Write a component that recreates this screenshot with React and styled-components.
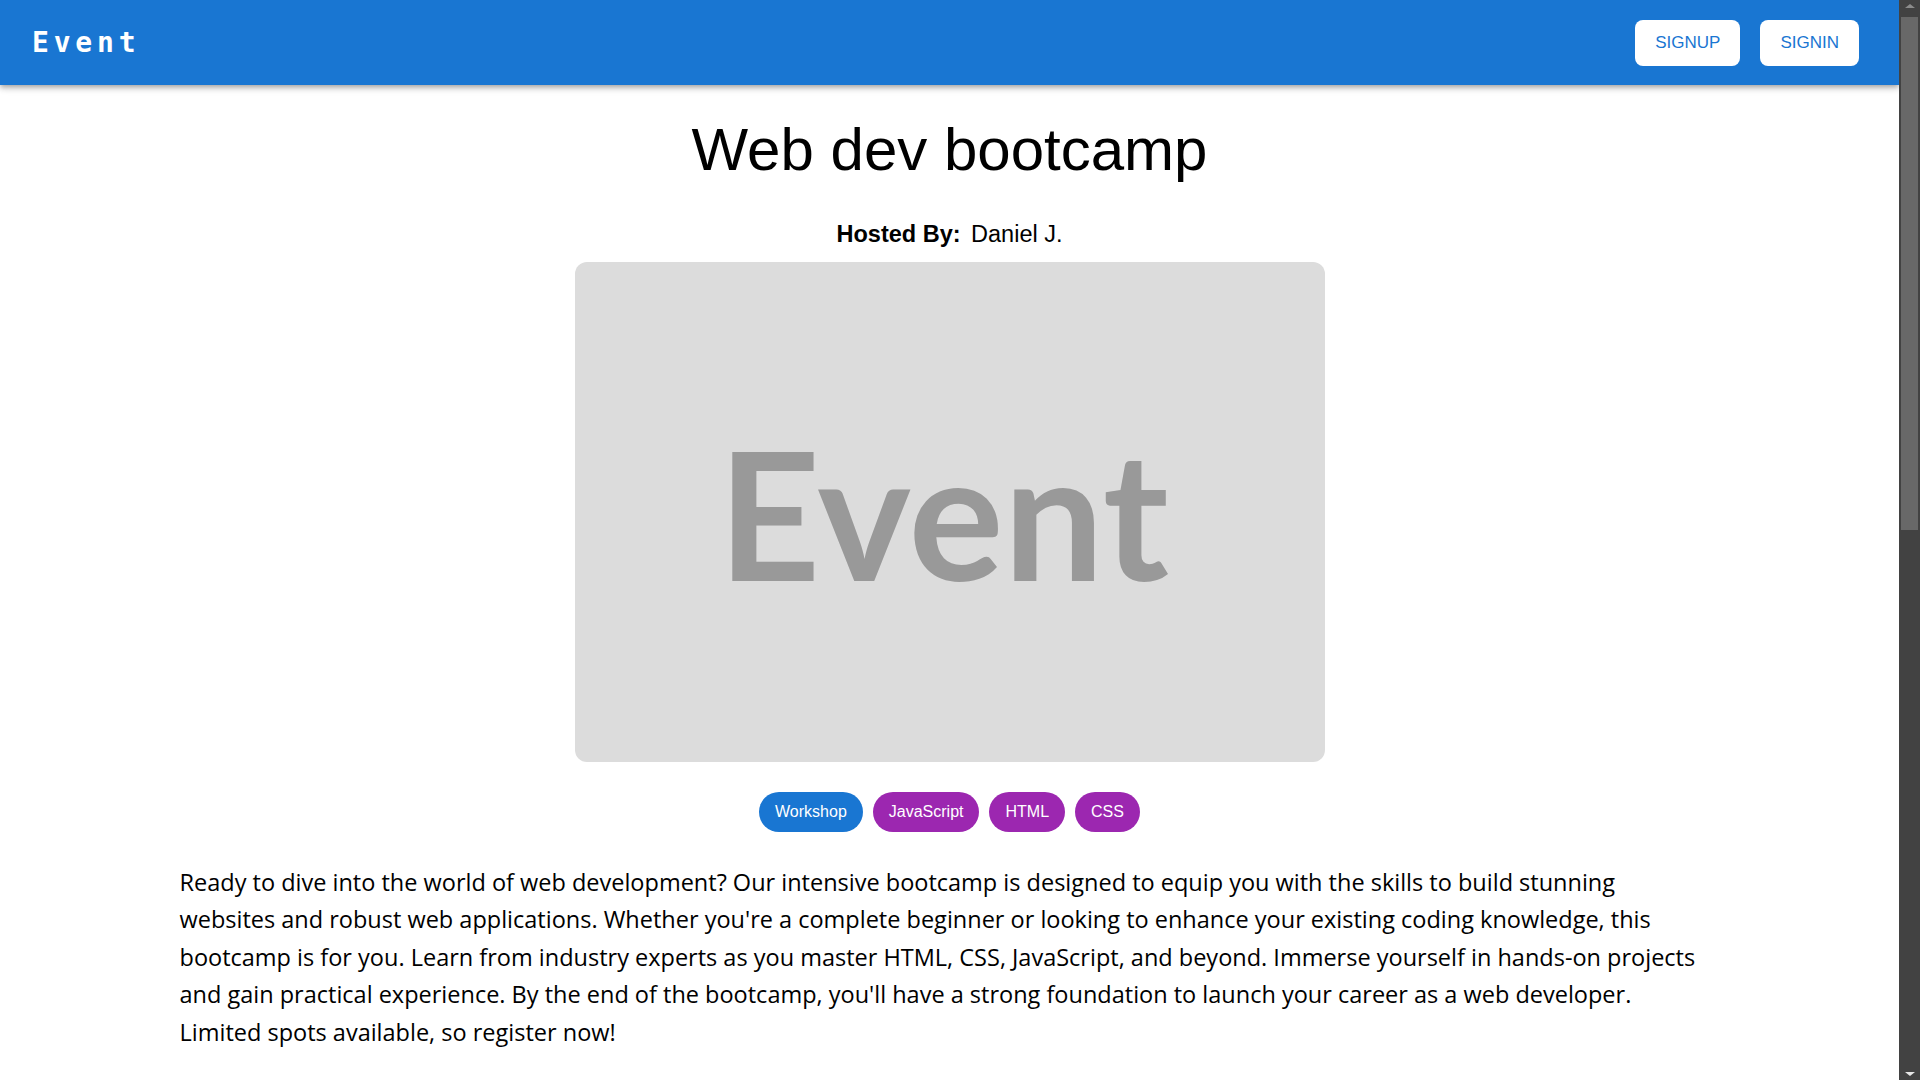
import React from 'react'
import styled, { createGlobalStyle } from 'styled-components'

const GlobalStyle = createGlobalStyle`
  html {
    background: #ffffff;
  }
  body {
    margin: 0;
    background: #ffffff;
    color: #000000;
    font-family: 'Liberation Sans', Arial, sans-serif;
  }
`;

const event = {
  title: 'Web dev bootcamp',
  host: 'Daniel J.',
  tags: [
    { label: 'Workshop', kind: 'type' },
    { label: 'JavaScript', kind: 'topic' },
    { label: 'HTML', kind: 'topic' },
    { label: 'CSS', kind: 'topic' },
  ],
  description:
    "Ready to dive into the world of web development? Our intensive bootcamp is designed to equip you with the skills to build stunning websites and robust web applications. Whether you're a complete beginner or looking to enhance your existing coding knowledge, this bootcamp is for you. Learn from industry experts as you master HTML, CSS, JavaScript, and beyond. Immerse yourself in hands-on projects and gain practical experience. By the end of the bootcamp, you'll have a strong foundation to launch your career as a web developer. Limited spots available, so register now!",
};

const App = () => {
  return (
    <>
      <GlobalStyle />
      <Page>
        <AppBar>
          <Logo>Event</Logo>
          <Actions>
            <NavButton>SIGNUP</NavButton>
            <NavButton>SIGNIN</NavButton>
          </Actions>
        </AppBar>

        <Main>
          <Title>{event.title}</Title>
          <Host>
            <strong>Hosted By:</strong> {event.host}
          </Host>
          <Cover>
            <CoverText>Event</CoverText>
          </Cover>
          <Tags>
            {event.tags.map((t) => (
              <Chip key={t.label} kind={t.kind}>{t.label}</Chip>
            ))}
          </Tags>
          <Description>{event.description}</Description>
        </Main>
      </Page>

      {/* window scrollbar, as the browser draws it */}
      <ScrollTrack>
        <ScrollArrow dir="up" />
        <ScrollThumb />
        <ScrollArrow dir="down" />
      </ScrollTrack>
    </>
  )
}

export default App

const Page = styled.div`
  margin-right: 21px;
  min-height: 1080px;
  background: #ffffff;
`;

const AppBar = styled.header`
  height: 85px;
  box-sizing: border-box;
  padding: 0 40px 0 32px;
  display: flex;
  align-items: center;
  justify-content: space-between;
  background-color: #1976d2;
  box-shadow: 0px 2px 4px -1px rgba(0, 0, 0, 0.2), 0px 4px 5px 0px rgba(0, 0, 0, 0.14), 0px 1px 10px 0px rgba(0, 0, 0, 0.12);
`;

const Logo = styled.div`
  font-family: 'DejaVu Sans Mono', monospace;
  font-weight: 700;
  font-size: 28px;
  letter-spacing: 4.8px;
  color: #ffffff;
`;

const Actions = styled.div`
  display: flex;
  gap: 20px;
`;

const NavButton = styled.button`
  height: 46px;
  padding: 0 20px;
  border: none;
  border-radius: 8px;
  background: #ffffff;
  color: #1976d2;
  font-family: 'Liberation Sans', Arial, sans-serif;
  font-size: 17px;
  cursor: pointer;
`;

const Main = styled.main`
  width: 1540px;
  margin: 0 auto;
  padding-top: 29px;
  display: flex;
  flex-direction: column;
  align-items: center;
`;

const Title = styled.h1`
  margin: 0;
  font-family: 'Liberation Sans', Arial, sans-serif;
  font-weight: 400;
  font-size: 60px;
  line-height: 72px;
  color: #000000;
`;

const Host = styled.p`
  margin: 35px 0 0;
  font-family: 'Liberation Sans', Arial, sans-serif;
  font-size: 23.5px;
  line-height: 26px;

  strong {
    font-weight: 700;
    margin-right: 4px;
  }
`;

const Cover = styled.div`
  margin-top: 15px;
  width: 750px;
  height: 500px;
  border-radius: 12px;
  background: #dcdcdc;
  display: flex;
  align-items: center;
  justify-content: center;
`;

const CoverText = styled.span`
  margin-right: 12px;
  font-family: Lato, sans-serif;
  font-weight: 700;
  font-size: 178px;
  color: #999999;
`;

const Tags = styled.div`
  margin-top: 30px;
  display: flex;
  gap: 10px;
`;

const Chip = styled.span`
  height: 40px;
  padding: 0 16px;
  border-radius: 20px;
  display: inline-flex;
  align-items: center;
  font-family: 'Liberation Sans', Arial, sans-serif;
  font-size: 16px;
  color: #ffffff;
  background: ${(p) => (p.kind === 'type' ? '#1976d2' : '#9c27b0')};
`;

const Description = styled.p`
  margin: 32px 0 0;
  width: 1532px;
  align-self: flex-start;
  font-family: 'Open Sans', sans-serif;
  font-size: 23.5px;
  line-height: 37.4px;
  color: #000000;
`;

const ScrollTrack = styled.div`
  position: fixed;
  top: 0;
  right: 0;
  bottom: 0;
  width: 21px;
  background: #424242;
  display: flex;
  flex-direction: column;
  align-items: center;
`;

const ScrollThumb = styled.div`
  width: 17px;
  height: 513px;
  margin-top: 9px;
  background: #686868;
`;

const ScrollArrow = styled.div`
  width: 0;
  height: 0;
  border-left: 5px solid transparent;
  border-right: 5px solid transparent;
  ${(p) =>
    p.dir === 'up'
      ? `border-bottom: 4px solid #8c8c8c; margin-top: 4px;`
      : `border-top: 4px solid #e6e6e6; margin-top: auto; margin-bottom: 4px;`}
`;
